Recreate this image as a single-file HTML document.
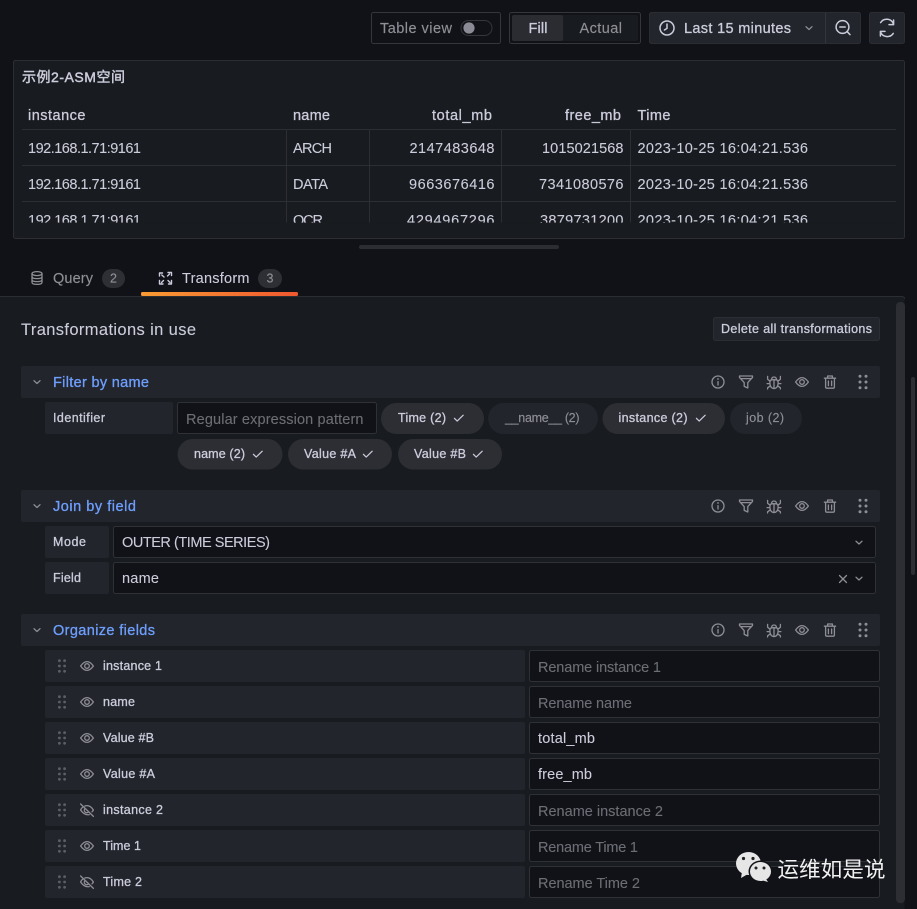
<!DOCTYPE html>
<html lang="zh">
<head>
<meta charset="utf-8">
<title>Transformations</title>
<style>
html,body{margin:0;padding:0;background:#111217;width:917px;height:909px;overflow:hidden}
svg{display:block}
text{font-family:"Liberation Sans","Noto Sans CJK SC",sans-serif;font-size:14.5px;fill:#ccccdc;stroke:#ccccdc;stroke-width:.1px}
.m{stroke:#ccccdc;stroke-width:.3px}
.s{font-size:12.5px}
.dim{fill:#8e8f96;stroke:#8e8f96;stroke-width:.15px}
.ph{fill:#6c6e76;stroke:#6c6e76;stroke-width:.1px}
.in{fill:#111217;stroke:#2f3136;stroke-width:1}
.hd{fill:#22252b}
.ln{stroke:#2c2e33;stroke-width:1;fill:none}
.ic{fill:none;stroke:#8e8f96;stroke-width:1.3;stroke-linecap:round;stroke-linejoin:round}
.tb{fill:none;stroke:#ccccdc;stroke-width:1.5;stroke-linecap:round;stroke-linejoin:round}
.ck{fill:none;stroke:#ccccdc;stroke-width:1.2;stroke-linecap:round;stroke-linejoin:round}
.b{fill:#6e9fff;stroke:#6e9fff;stroke-width:.3px}
</style>
</head>
<body>
<svg xmlns="http://www.w3.org/2000/svg" width="917" height="909" viewBox="0 0 917 909">
<defs>
  <g id="chev"><path class="ic" d="M-3 -1.3 L0 1.5 L3 -1.3"/></g>
  <g id="check"><path class="ck" d="M-4.6 0.3 L-1.8 3.1 L4.2 -2.8"/></g>
  <g id="info"><circle class="ic" r="6"/><path class="ic" d="M0 -0.3 V3"/><circle r=".9" cy="-3" fill="#8e8f96"/></g>
  <g id="filter"><path class="ic" d="M-6.5 -6 H6.5 V-4.6 L1.8 0.6 V6 L-1.8 4.4 V0.6 L-6.5 -4.6 Z M-4.5 -3.4 H4.5"/></g>
  <g id="bug"><path class="ic" d="M-3.8 -1.6 Q0 -3 3.8 -1.6 Q4.4 1 3.8 3.2 Q3 6.4 0 6.6 Q-3 6.4 -3.8 3.2 Q-4.4 1 -3.8 -1.6 Z M0 -1.8 V6.6 M-2.4 -2.2 Q-2.4 -5 0 -5 Q2.4 -5 2.4 -2.2 M-3.8 -0.6 L-6.4 -2.8 V-5.6 M3.8 -0.6 L6.4 -2.8 V-5.6 M-4 1.6 H-6.9 M4 1.6 H6.9 M-3.6 3.8 L-6.4 5.8 V7 M3.6 3.8 L6.4 5.8 V7"/></g>
  <g id="eye"><path class="ic" d="M-6.4 0 Q0 -8.8 6.4 0 Q0 8.8 -6.4 0 Z"/><circle class="ic" r="2.3"/></g>
  <g id="eyeoff"><path class="ic" d="M-4.6 -2.6 Q-5.8 -1.4 -6.4 0 Q-2.6 5.6 2.2 4.6 M-2.2 -4 Q2.8 -5.6 6.4 0 Q5.8 1 5 1.8 M-2 -1.4 A2.4 2.4 0 0 0 1.4 2 M-6.4 -6 L6.4 6.4"/></g>
  <g id="trash"><path class="ic" d="M-5.6 -3.8 H5.6 M-2.4 -3.8 V-6 H2.4 V-3.8 M-4.4 -3.8 V5 Q-4.4 6.2 -3.2 6.2 H3.2 Q4.4 6.2 4.4 5 V-3.8 M-1.6 -1 V3.6 M1.6 -1 V3.6"/></g>
  <g id="drag" fill="#8e8f96"><circle cx="-3" cy="-5.7" r="1.5"/><circle cx="3" cy="-5.7" r="1.5"/><circle cx="-3" cy="0" r="1.5"/><circle cx="3" cy="0" r="1.5"/><circle cx="-3" cy="5.7" r="1.5"/><circle cx="3" cy="5.7" r="1.5"/></g>
  <g id="drag2" fill="#5c5e66"><circle cx="-2.6" cy="-5.3" r="1.4"/><circle cx="2.6" cy="-5.3" r="1.4"/><circle cx="-2.6" cy="0" r="1.4"/><circle cx="2.6" cy="0" r="1.4"/><circle cx="-2.6" cy="5.3" r="1.4"/><circle cx="2.6" cy="5.3" r="1.4"/></g>
  <g id="tools"><use href="#info" x="718"/><use href="#filter" x="746"/><use href="#bug" x="774"/><use href="#eye" x="802"/><use href="#trash" x="830"/><use href="#drag" x="863"/></g>
  <linearGradient id="grad" x1="0" x2="1" y1="0" y2="0"><stop offset="0" stop-color="#f99b33"/><stop offset="1" stop-color="#f0572f"/></linearGradient>
</defs>

<!-- page background -->
<rect width="917" height="909" fill="#111217"/>

<!-- top toolbar -->
<rect x="371.5" y="12.5" width="129" height="31" rx="2" fill="#111217" stroke="#34363c"/>
<text x="380" y="33" textLength="72" class="dim">Table view</text>
<rect x="461" y="20.5" width="31" height="15" rx="7.5" fill="none" stroke="#34363c"/>
<circle cx="469" cy="28" r="5.6" fill="#8a8b95"/>

<rect x="509.5" y="12.5" width="131" height="31" rx="2" fill="#111217" stroke="#34363c"/>
<rect x="512" y="15" width="126" height="26" rx="2" fill="#181b1f"/>
<rect x="512" y="15" width="51" height="26" rx="2" fill="#2a2c32"/>
<text x="528.5" y="33" textLength="19" class="m">Fill</text>
<text x="579.5" y="33" textLength="42.5" class="dim">Actual</text>

<rect x="649.5" y="12.5" width="211" height="31" rx="2" fill="#22252b" stroke="#2b2d32"/>
<path d="M825.5 13 V43" stroke="#33353b"/>
<circle cx="667" cy="28" r="7" class="tb"/>
<path d="M667 24 V28.4 L664.4 30" class="tb"/>
<text x="684" y="33" textLength="107" class="m">Last 15 minutes</text>
<use href="#chev" x="809" y="28"/>
<circle cx="842.5" cy="27" r="6.4" class="tb"/>
<path d="M839.8 27 H845.2 M847.2 31.7 L850 34.6" class="tb"/>

<rect x="869.5" y="12.5" width="35" height="31" rx="2" fill="#22252b" stroke="#2b2d32"/>
<path d="M880.6 22.6 A7.2 7.2 0 0 1 893.6 24.4 M893.6 20 V24.6 H889 M893.2 33.4 A7.2 7.2 0 0 1 880.4 31.6 M880.4 36 V31.4 H885" class="tb"/>

<!-- table panel -->
<rect x="13.5" y="60.5" width="891" height="178" rx="2" fill="#181b1f" stroke="#2c2e33"/>
<text x="22" y="82" textLength="103" class="m" style="stroke-width:.45px;font-size:14px">示例2-ASM空间</text>

<text x="28" y="120" textLength="57.5" class="m">instance</text>
<text x="293" y="120" textLength="37" class="m">name</text>
<text x="432" y="120" textLength="60" class="m">total_mb</text>
<text x="565" y="120" textLength="56" class="m">free_mb</text>
<text x="637.5" y="120" textLength="33" class="m">Time</text>

<path class="ln" d="M22 129.5 H896 M22 165.5 H896 M22 201.5 H896 M286.5 130 V222.5 M369.5 130 V222.5 M501.5 130 V222.5 M630.5 130 V222.5"/>

<text x="28" y="153" textLength="113">192.168.1.71:9161</text>
<text x="293" y="153" textLength="39">ARCH</text>
<text x="409.5" y="153" textLength="85">2147483648</text>
<text x="542" y="153" textLength="81.5">1015021568</text>
<text x="637.5" y="153" textLength="170.5">2023-10-25 16:04:21.536</text>

<text x="28" y="189" textLength="113">192.168.1.71:9161</text>
<text x="293" y="189" textLength="35">DATA</text>
<text x="409" y="189" textLength="85.5">9663676416</text>
<text x="539" y="189" textLength="84.5">7341080576</text>
<text x="637.5" y="189" textLength="170.5">2023-10-25 16:04:21.536</text>

<text x="28" y="225" textLength="113">192.168.1.71:9161</text>
<text x="293" y="225" textLength="30">QCR</text>
<text x="407" y="225" textLength="87.5">4294967296</text>
<text x="540" y="225" textLength="83.5">3879731200</text>
<text x="637.5" y="225" textLength="170.5">2023-10-25 16:04:21.536</text>
<rect x="20" y="222.6" width="880" height="15" fill="#181b1f"/>

<!-- resize handle -->
<rect x="359" y="245" width="200" height="4" rx="2" fill="#2b2d33"/>

<!-- tabs -->
<g class="ic" transform="translate(37 278)">
  <ellipse rx="5" ry="2" cy="-4.4"/>
  <path d="M-5 -4.4 V4.4 Q-5 6.4 0 6.4 Q5 6.4 5 4.4 V-4.4 M-5 -1.4 Q-5 .6 0 .6 Q5 .6 5 -1.4 M-5 1.6 Q-5 3.6 0 3.6 Q5 3.6 5 1.6"/>
</g>
<text x="53" y="283" textLength="40" class="dim">Query</text>
<rect x="102" y="269" width="23" height="19" rx="9.5" fill="#2d2f35"/>
<text x="113.5" y="282.5" class="s dim" text-anchor="middle">2</text>

<path class="ic" style="stroke:#ccccdc;stroke-width:1.4" d="M159.5 276 V273 H162.5 M168 272.5 H171.5 V275.5 M171.5 280.5 V284 H168.5 M163 284 H159.5 V280.5 M164 277 L161.8 275 M167.5 276 L169.5 274 M168 280.5 L170 282.5 M163.5 280.5 L161.5 282.5"/>
<text x="182" y="283" textLength="67.5">Transform</text>
<rect x="258" y="269" width="24" height="19" rx="9.5" fill="#2d2f35"/>
<text x="270" y="282.5" class="s dim" text-anchor="middle">3</text>

<!-- editor panel -->
<path d="M0 296.5 H902 Q904.5 296.5 904.5 299 V909 H0 Z" fill="#181b1f"/>
<path d="M0 296.5 H902 Q904.5 296.5 904.5 299" fill="none" stroke="#2c2e33"/>
<rect x="141" y="292" width="157" height="4" rx="1.5" fill="url(#grad)"/>

<!-- scrollbars -->
<rect x="896" y="302" width="9" height="601" rx="4" fill="#2c2e33"/>
<rect x="911" y="377" width="4" height="198" rx="2" fill="#2c2e33"/>

<text x="21" y="335" textLength="175" style="font-size:16.5px">Transformations in use</text>
<rect x="713.5" y="317.5" width="166" height="23" rx="2" fill="#22252b" stroke="#2c2e33"/>
<text x="721" y="333" textLength="151" class="s m">Delete all transformations</text>

<!-- Filter by name -->
<rect x="21" y="366" width="859" height="32" rx="2" class="hd"/>
<use href="#chev" x="37" y="382"/>
<text x="53" y="387" textLength="96" class="b">Filter by name</text>
<use href="#tools" y="382"/>

<rect x="45" y="402" width="128" height="32" rx="2" class="hd"/>
<text x="53" y="422" textLength="52" class="s m">Identifier</text>
<rect x="177.5" y="402.5" width="199" height="31" rx="2" class="in"/>
<text x="186" y="424" textLength="177.5" class="ph">Regular expression pattern</text>

<rect x="381" y="403" width="103" height="31" rx="15.5" fill="#2c2e34"/>
<text x="398" y="422" textLength="48" class="s m">Time (2)</text>
<use href="#check" x="459" y="418"/>
<rect x="488" y="403" width="110" height="31" rx="15.5" fill="#22252b"/>
<text x="505" y="422" textLength="74.5" class="s dim">__name__ (2)</text>
<rect x="602.5" y="403" width="122.5" height="31" rx="15.5" fill="#2c2e34"/>
<text x="618.5" y="422" textLength="69" class="s m">instance (2)</text>
<use href="#check" x="701" y="418"/>
<rect x="730" y="403" width="72" height="31" rx="15.5" fill="#22252b"/>
<text x="746" y="422" textLength="38" class="s dim">job (2)</text>

<rect x="177.5" y="439" width="105" height="30.5" rx="15.2" fill="#2c2e34"/>
<text x="194" y="458" textLength="51" class="s m">name (2)</text>
<use href="#check" x="258" y="454"/>
<rect x="288" y="439" width="104" height="30.5" rx="15.2" fill="#2c2e34"/>
<text x="304" y="458" textLength="52" class="s m">Value #A</text>
<use href="#check" x="368" y="454"/>
<rect x="398" y="439" width="104" height="30.5" rx="15.2" fill="#2c2e34"/>
<text x="414" y="458" textLength="52" class="s m">Value #B</text>
<use href="#check" x="478" y="454"/>

<!-- Join by field -->
<rect x="21" y="490" width="859" height="32" rx="2" class="hd"/>
<use href="#chev" x="37" y="506"/>
<text x="53" y="511" textLength="83" class="b">Join by field</text>
<use href="#tools" y="506"/>

<rect x="45" y="526" width="64" height="32" rx="2" class="hd"/>
<text x="53" y="546" textLength="33" class="s m">Mode</text>
<rect x="113.5" y="526.5" width="762" height="31" rx="2" class="in"/>
<text x="122" y="547" textLength="148">OUTER (TIME SERIES)</text>
<use href="#chev" x="859" y="542.5"/>

<rect x="45" y="562" width="64" height="32" rx="2" class="hd"/>
<text x="53" y="582" textLength="28" class="s m">Field</text>
<rect x="113.5" y="562.5" width="762" height="31" rx="2" class="in"/>
<text x="122" y="583" textLength="37">name</text>
<path class="ic" d="M839.5 575.5 L846.5 582.5 M846.5 575.5 L839.5 582.5"/>
<use href="#chev" x="859" y="578.5"/>

<!-- Organize fields -->
<rect x="21" y="614" width="859" height="32" rx="2" class="hd"/>
<use href="#chev" x="37" y="630"/>
<text x="53" y="635" textLength="102" class="b">Organize fields</text>
<use href="#tools" y="630"/>

<rect x="45" y="650" width="480" height="32" rx="2" class="hd"/>
<use href="#drag2" x="62" y="666"/><use href="#eye" x="87" y="666"/>
<text x="103" y="670" textLength="59" class="s m">instance 1</text>
<rect x="529.5" y="650.5" width="350" height="31" rx="2" class="in"/>
<text x="538" y="672" textLength="123" class="ph">Rename instance 1</text>

<rect x="45" y="686" width="480" height="32" rx="2" class="hd"/>
<use href="#drag2" x="62" y="702"/><use href="#eye" x="87" y="702"/>
<text x="103" y="706" textLength="32" class="s m">name</text>
<rect x="529.5" y="686.5" width="350" height="31" rx="2" class="in"/>
<text x="538" y="708" textLength="94" class="ph">Rename name</text>

<rect x="45" y="722" width="480" height="32" rx="2" class="hd"/>
<use href="#drag2" x="62" y="738"/><use href="#eye" x="87" y="738"/>
<text x="103" y="742" textLength="51" class="s m">Value #B</text>
<rect x="529.5" y="722.5" width="350" height="31" rx="2" class="in"/>
<text x="538" y="743" textLength="57">total_mb</text>

<rect x="45" y="758" width="480" height="32" rx="2" class="hd"/>
<use href="#drag2" x="62" y="774"/><use href="#eye" x="87" y="774"/>
<text x="103" y="778" textLength="52" class="s m">Value #A</text>
<rect x="529.5" y="758.5" width="350" height="31" rx="2" class="in"/>
<text x="538" y="779" textLength="54">free_mb</text>

<rect x="45" y="794" width="480" height="32" rx="2" class="hd"/>
<use href="#drag2" x="62" y="810"/><use href="#eyeoff" x="87" y="810"/>
<text x="103" y="814" textLength="60" class="s m">instance 2</text>
<rect x="529.5" y="794.5" width="350" height="31" rx="2" class="in"/>
<text x="538" y="816" textLength="125" class="ph">Rename instance 2</text>

<rect x="45" y="830" width="480" height="32" rx="2" class="hd"/>
<use href="#drag2" x="62" y="846"/><use href="#eye" x="87" y="846"/>
<text x="103" y="850" textLength="38" class="s m">Time 1</text>
<rect x="529.5" y="830.5" width="350" height="31" rx="2" class="in"/>
<text x="538" y="852" textLength="100" class="ph">Rename Time 1</text>

<rect x="45" y="866" width="480" height="32" rx="2" class="hd"/>
<use href="#drag2" x="62" y="882"/><use href="#eyeoff" x="87" y="882"/>
<text x="103" y="886" textLength="39" class="s m">Time 2</text>
<rect x="529.5" y="866.5" width="350" height="31" rx="2" class="in"/>
<text x="538" y="888" textLength="102" class="ph">Rename Time 2</text>

<!-- watermark -->
<g>
  <path d="M742 872 L741 878 L748 874 Z" fill="#e6e6e6"/>
  <ellipse cx="748.5" cy="863.5" rx="12.5" ry="11.5" fill="#e6e6e6"/>
  <circle cx="743.5" cy="858.5" r="1.6" fill="#222"/>
  <circle cx="753" cy="858.5" r="1.6" fill="#222"/>
  <ellipse cx="760.5" cy="871.5" rx="12" ry="11" fill="#111217"/>
  <path d="M766 879 L768 882 L761 880 Z" fill="#e6e6e6"/>
  <ellipse cx="760.5" cy="871.5" rx="10.5" ry="9.5" fill="#e6e6e6"/>
  <circle cx="756" cy="868" r="1.5" fill="#222"/>
  <circle cx="764" cy="868" r="1.5" fill="#222"/>
  <text x="777.5" y="877" textLength="108" style="font-size:21.5px;fill:#f2f2f2;stroke:none;font-family:'Noto Sans CJK SC','WenQuanYi Zen Hei',sans-serif">运维如是说</text>
</g>
</svg>
</body>
</html>
